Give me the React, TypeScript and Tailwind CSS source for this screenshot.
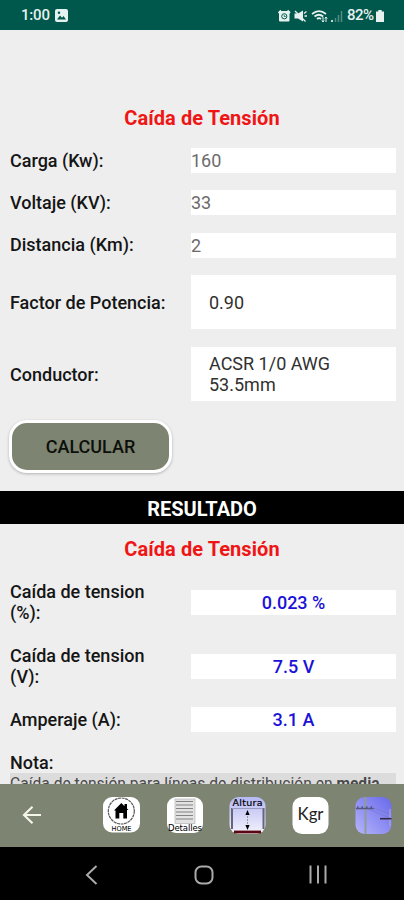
import React from 'react';

interface Field {
  label: string;
  value: string;
}

const inputs: Field[] = [
  { label: 'Carga (Kw):', value: '160' },
  { label: 'Voltaje (KV):', value: '33' },
  { label: 'Distancia (Km):', value: '2' },
];

const selects: Field[] = [
  { label: 'Factor de Potencia:', value: '0.90' },
  { label: 'Conductor:', value: 'ACSR 1/0 AWG 53.5mm' },
];

const StatusBar = () => (
  <header className="h-[30px] shrink-0 bg-[#00574b] flex items-center justify-between pl-[21px] pr-[20px] pt-px text-[#e6f2ef]">
    <div className="flex items-center gap-[6px]">
      <span className="text-[15px] leading-none w-[28px] whitespace-nowrap font-medium tracking-[-0.2px]">1:00</span>
      <svg width="13" height="13" viewBox="0 0 13 13">
        <rect width="13" height="13" rx="2" fill="currentColor" />
        <path d="M2 10.5 L5 6.5 L7 8.7 L8.5 7 L11 10.5 Z" fill="#00574b" />
        <circle cx="4" cy="3.8" r="1.2" fill="#00574b" />
      </svg>
    </div>
    <div className="flex items-center">
      <svg className="mr-px" width="68" height="14" viewBox="0 0 68 14" fill="none" stroke="currentColor">
        <path d="M1.5 2.5h9.5v9.5h-9.5z" fill="currentColor" />
        <path d="M.5 4 L3 1.5 M12 4 L9.5 1.5" strokeWidth="1.8" />
        <circle cx="6.3" cy="7.3" r="2.6" stroke="#00574b" />
        <path d="M6.3 6 V7.5 H7.8" stroke="#00574b" strokeWidth=".8" />
        <path d="M16.5 4.5 H20 L25 1.5 V12.5 L20 9.5 H16.5 Z" fill="currentColor" stroke="none" />
        <path d="M17 2 L27.5 12.5" strokeWidth="1.3" />
        <path d="M26 4.5 L28.5 2.5 M26.5 7 H29" strokeWidth="1.3" />
        <path d="M34 5 Q41 -.8 48 5 M36.5 7.5 Q41 4 45.2 7.5 M39 10 Q41 8.2 43 10" strokeWidth="1.7" />
        <path d="M45 8 V13 M48 8 V13 M43.8 11.5 L45 13 L46.2 11.5 M46.8 9.5 L48 8 L49.2 9.5" strokeWidth="1" />
        <path d="M54 11 V13" strokeWidth="1.7" />
        <path d="M57.5 9 V13 M60.5 6 V13 M63.5 2 V13" strokeWidth="1.5" opacity=".35" />
      </svg>
      <span className="text-[15px] leading-none w-[28px] whitespace-nowrap font-medium tracking-[-0.5px]">82%</span>
      <svg className="ml-px" width="8" height="12" viewBox="0 0 8 12">
        <path d="M2.3 0h3.4v1.5H8V12H0V1.5h2.3z" fill="currentColor" />
      </svg>
    </div>
  </header>
);

const Label = ({ children }: { children: React.ReactNode }) => (
  <span className="w-[181px] pr-[20px] shrink-0 text-[18px] leading-[21.5px] font-medium text-[#151515]">
    {children}
  </span>
);

const Result = ({ value }: { value: string }) => (
  <div className="w-[205px] h-[25px] bg-white flex items-center justify-center text-[18px] font-medium text-[#1b12d8]">
    {value}
  </div>
);

const Calculator = () => (
  <main className="h-[754px] shrink-0 overflow-hidden bg-[#eeeeee]">
    <h1 className="mt-[74px] h-[27px] leading-[28px] text-center text-[20px] font-bold tracking-[0.08px] text-[#f01515]">Caída de Tensión</h1>

    <div className="mt-[17px] pl-[10px] flex flex-col gap-[17.3px]">
      {inputs.map((f) => (
        <div key={f.label} className="flex items-center h-[25px]">
          <Label>{f.label}</Label>
          <div className="w-[205px] h-[25px] bg-white text-[18px] leading-[25px] text-[#6b6b6b]">{f.value}</div>
        </div>
      ))}
    </div>

    <div className="mt-[17.4px] pl-[10px] flex flex-col gap-[18px]">
      {selects.map((f) => (
        <div key={f.label} className="flex items-center h-[54px]">
          <span className="w-[181px] pt-[2px] shrink-0 text-[18px] font-medium text-[#151515]">{f.label}</span>
          <div className="w-[205px] h-[54px] pt-px bg-white flex items-center pl-[18px] pr-[45px] text-[18px] leading-[21px] text-[#303030]">
            {f.value}
          </div>
        </div>
      ))}
    </div>

    <button className="block ml-[9px] mt-[19px] w-[163px] h-[53px] rounded-[18px] border-[3px] border-white bg-[#7d8471] text-[18px] font-medium text-[#0c0f0a] shadow-[0_1px_3px_rgba(0,0,0,0.25)]">
      CALCULAR
    </button>

    <h2 className="mt-[18px] h-[33px] leading-[36px] bg-black text-white text-center text-[20px] font-bold">RESULTADO</h2>
    <h3 className="h-[57px] leading-[50px] text-center text-[20px] font-bold tracking-[0.08px] text-[#f01515]">Caída de Tensión</h3>

    <div className="pl-[10px]">
      <div className="flex items-center h-[43px]">
        <Label>Caída de tension (%):</Label>
        <Result value="0.023 %" />
      </div>
      <div className="flex items-center h-[43px] mt-[21px]">
        <Label>Caída de tension (V):</Label>
        <Result value="7.5 V" />
      </div>
      <div className="flex items-center h-[25px] mt-[19px]">
        <Label>Amperaje (A):</Label>
        <Result value="3.1 A" />
      </div>
      <div className="flex items-center h-[21px] mt-[20px]">
        <Label>Nota:</Label>
      </div>
      <p className="w-[386px] h-[40px] bg-[#dcdcdc] text-[15.6px] leading-[22px] text-[#4a4a4a] whitespace-nowrap">
        Caída de tensión para líneas de distribución en <b className="font-bold">media</b>
      </p>
    </div>
  </main>
);

const Toolbar = () => (
  <nav className="h-[63px] shrink-0 bg-[#7d8471] flex items-center pl-[22px]">
    <svg className="mr-[61px] mb-px" width="20" height="20" viewBox="0 0 20 20" fill="none" stroke="#f3f5e8" strokeWidth="2.2">
      <path d="M19 10 H2 M10.5 1.8 L2 10 L10.5 18.2" />
    </svg>

    <div className="flex gap-[26px] text-black">
      <svg width="37" height="37" viewBox="0 0 37 37">
        <rect width="37" height="35.5" rx="9" fill="#fff" />
        <circle cx="18.3" cy="14" r="13" fill="none" stroke="#555" strokeWidth="1.2" strokeDasharray="3 .6" />
        <path d="M18.3 6 L25.5 13 H24 V21.5 H20.3 V16 H16.3 V21.5 H12.5 V13.5 H11 Z M21.5 7h2.5v5H21.5z" />
        <text x="18.5" y="33.5" fontSize="6.8" textAnchor="middle" textLength="20" lengthAdjust="spacingAndGlyphs" fontFamily="DejaVu Sans">HOME</text>
      </svg>

      <svg width="37" height="37" viewBox="0 0 37 37">
        <rect x="1" width="36" height="36" rx="9" fill="#fff" />
        <rect x="9" y="2" width="20" height="24.5" fill="#e3e3e3" stroke="#aaa" strokeWidth=".6" />
        <path d="M10 4.5h17M10 8h17M10 11.5h17M10 15h17M10 18.5h17M10 22h17" stroke="#777" strokeWidth=".9" />
        <text x="19" y="33.5" fontSize="8.5" textAnchor="middle" textLength="34" fontFamily="DejaVu Sans">Detalles</text>
      </svg>

      <svg width="37" height="37" viewBox="0 0 37 37">
        <defs>
          <linearGradient id="sky" x2="0" y2="1">
            <stop stopColor="#b5b8f3" />
            <stop offset="1" stopColor="#f4f3fc" />
          </linearGradient>
        </defs>
        <rect x=".5" width="36" height="37" rx="9" fill="url(#sky)" />
        <path d="M3 11 V32 M34.5 11 V32" stroke="#65657d" strokeWidth="2" />
        <path d="M3 11.5 H34" stroke="#9a9abd" strokeWidth="1" />
        <path d="M18.5 16 V31" stroke="#888" strokeWidth=".8" strokeDasharray="2 1" />
        <path d="M18.5 13 L20.6 18 H16.4 Z M18.5 33 L20.6 28 H16.4 Z" />
        <path d="M5 35 H32" stroke="#5b0712" strokeWidth="2.8" />
        <text x="18.5" y="8.5" fontSize="9.5" textAnchor="middle" textLength="30" fontFamily="DejaVu Sans" stroke="#000" strokeWidth=".2">Altura</text>
      </svg>

      <svg width="37" height="37" viewBox="0 0 37 37">
        <rect x=".5" width="36" height="37" rx="9.5" fill="#fff" />
        <text x="18.5" y="23" fontSize="16.5" textAnchor="middle" textLength="26" lengthAdjust="spacingAndGlyphs" fontFamily="Lato" fill="#222">Kgr</text>
      </svg>

      <svg width="37" height="37" viewBox="0 0 37 37">
        <defs>
          <linearGradient id="dusk" x1="1" x2="0" y2="1">
            <stop stopColor="#6868eb" />
            <stop offset="1" stopColor="#b5b5fb" />
          </linearGradient>
        </defs>
        <rect x=".5" width="36" height="37" rx="9" fill="url(#dusk)" />
        <path d="M10.5 0 V37" stroke="#8e9b9b" strokeWidth="2" />
        <path d="M1 11.5 H19" stroke="#55587b" strokeWidth="1.5" />
        <path d="M2 10 H18" stroke="#363850" strokeDasharray="1.5 3" />
        <path d="M13 12 L35 21 M18 11 L35 17" stroke="#7474c9" strokeWidth=".6" />
        <path d="M35 12 V29" stroke="#a7a7dd" strokeWidth="1.2" />
        <path d="M25 21.7 H36.5" stroke="#33283f" strokeWidth="1.5" />
      </svg>
    </div>
  </nav>
);

const SystemNav = () => (
  <footer className="h-[53px] shrink-0 bg-black flex items-center justify-between pl-[85px] pr-[77px] pt-[2px]">
    <svg width="13" height="20" viewBox="0 0 13 20" fill="none" stroke="#aaa" strokeWidth="2">
      <path d="M11.5 1 L2 10 L11.5 19" />
    </svg>
    <svg width="20" height="20" viewBox="0 0 20 20" fill="none" stroke="#aaa" strokeWidth="2">
      <rect x="1.5" y="1.5" width="17" height="17" rx="6" />
    </svg>
    <svg width="18" height="19" viewBox="0 0 18 19" fill="none" stroke="#aaa" strokeWidth="2">
      <path d="M1.5 0.5V18.5M9 0.5V18.5M16.5 0.5V18.5" />
    </svg>
  </footer>
);

const App = () => {
  return (
    <div className="w-[404px] h-[900px] overflow-hidden flex flex-col bg-[#eeeeee] font-[Roboto,sans-serif]">
      <StatusBar />
      <Calculator />
      <Toolbar />
      <SystemNav />
    </div>
  );
};

export default App;
